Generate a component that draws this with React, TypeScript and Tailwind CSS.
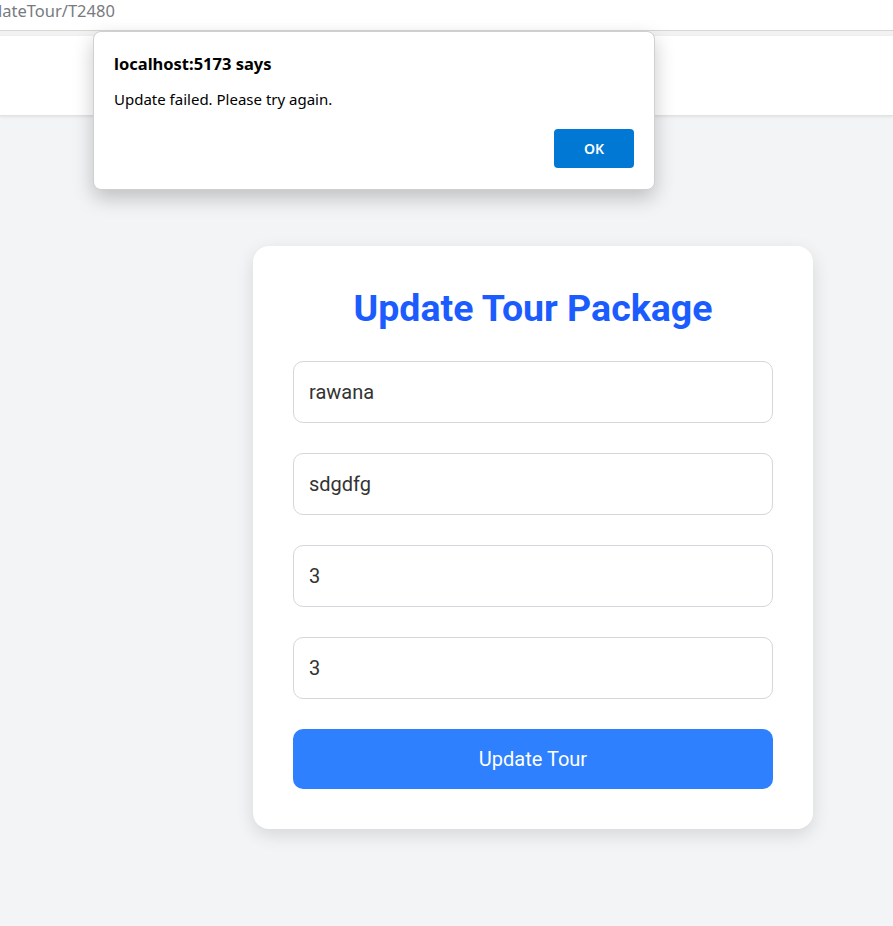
import React from "react";

export default function App() {
  const values = ["rawana", "sdgdfg", "3", "3"];
  return (
    <div className="relative min-h-[926px] bg-[#f3f4f6] font-['Roboto',sans-serif]">
      {/* browser address fragment */}
      <div className="h-[31px] bg-white border-b border-[#d6d6d6] overflow-hidden">
        <div className="h-[22px] leading-[22px] text-[16.5px] text-[#777b80] font-['Noto_Sans','Open_Sans',sans-serif] -ml-[2px]">
          lateTour/T2480
        </div>
      </div>
      <div className="h-[5px] bg-[#f2f2f2]" />
      {/* app header */}
      <div className="h-[80px] bg-white border-b border-[#e2e2e2] shadow-[0_1px_3px_rgba(0,0,0,0.08)]" />

      {/* main */}
      <div className="pt-[130px] pl-[253px] pb-[96px]">
        <div className="w-[560px] bg-white rounded-2xl p-10 shadow-[0_6px_18px_rgba(0,0,0,0.12)]">
          <h2 className="text-center text-[37.5px] leading-[44px] font-bold text-[#1b5cff] mb-[31px]">
            Update Tour Package
          </h2>
          <div className="flex flex-col gap-[30px]">
            {values.map((v, i) => (
              <input
                key={i}
                defaultValue={v}
                className="h-[62px] w-full rounded-[10px] border border-[#d4d6db] pl-[15px] pr-4 text-[20px] text-[#333] outline-none bg-white"
              />
            ))}
            <button className="h-[60px] w-full rounded-[10px] bg-[#2e80ff] text-white text-[20px]">
              Update Tour
            </button>
          </div>
        </div>
      </div>

      {/* alert dialog overlay */}
      <div className="absolute left-[93px] top-[31px] w-[562px] h-[159px] bg-white rounded-[8px] border border-[#d0d0d0] shadow-[0_8px_20px_rgba(0,0,0,0.22)] font-['Noto_Sans','Open_Sans',sans-serif] pl-[20px] pr-[20px] pt-[20px]">
        <div className="text-[16.5px] font-bold text-black leading-[24px]">localhost:5173 says</div>
        <div className="mt-[12px] text-[15px] text-black leading-[22px]">Update failed. Please try again.</div>
        <div className="flex justify-end mt-[19px]">
          <button className="w-[80px] h-[39px] rounded-[4px] bg-[#0078d4] text-white text-[14px] font-semibold">
            OK
          </button>
        </div>
      </div>
    </div>
  );
}
